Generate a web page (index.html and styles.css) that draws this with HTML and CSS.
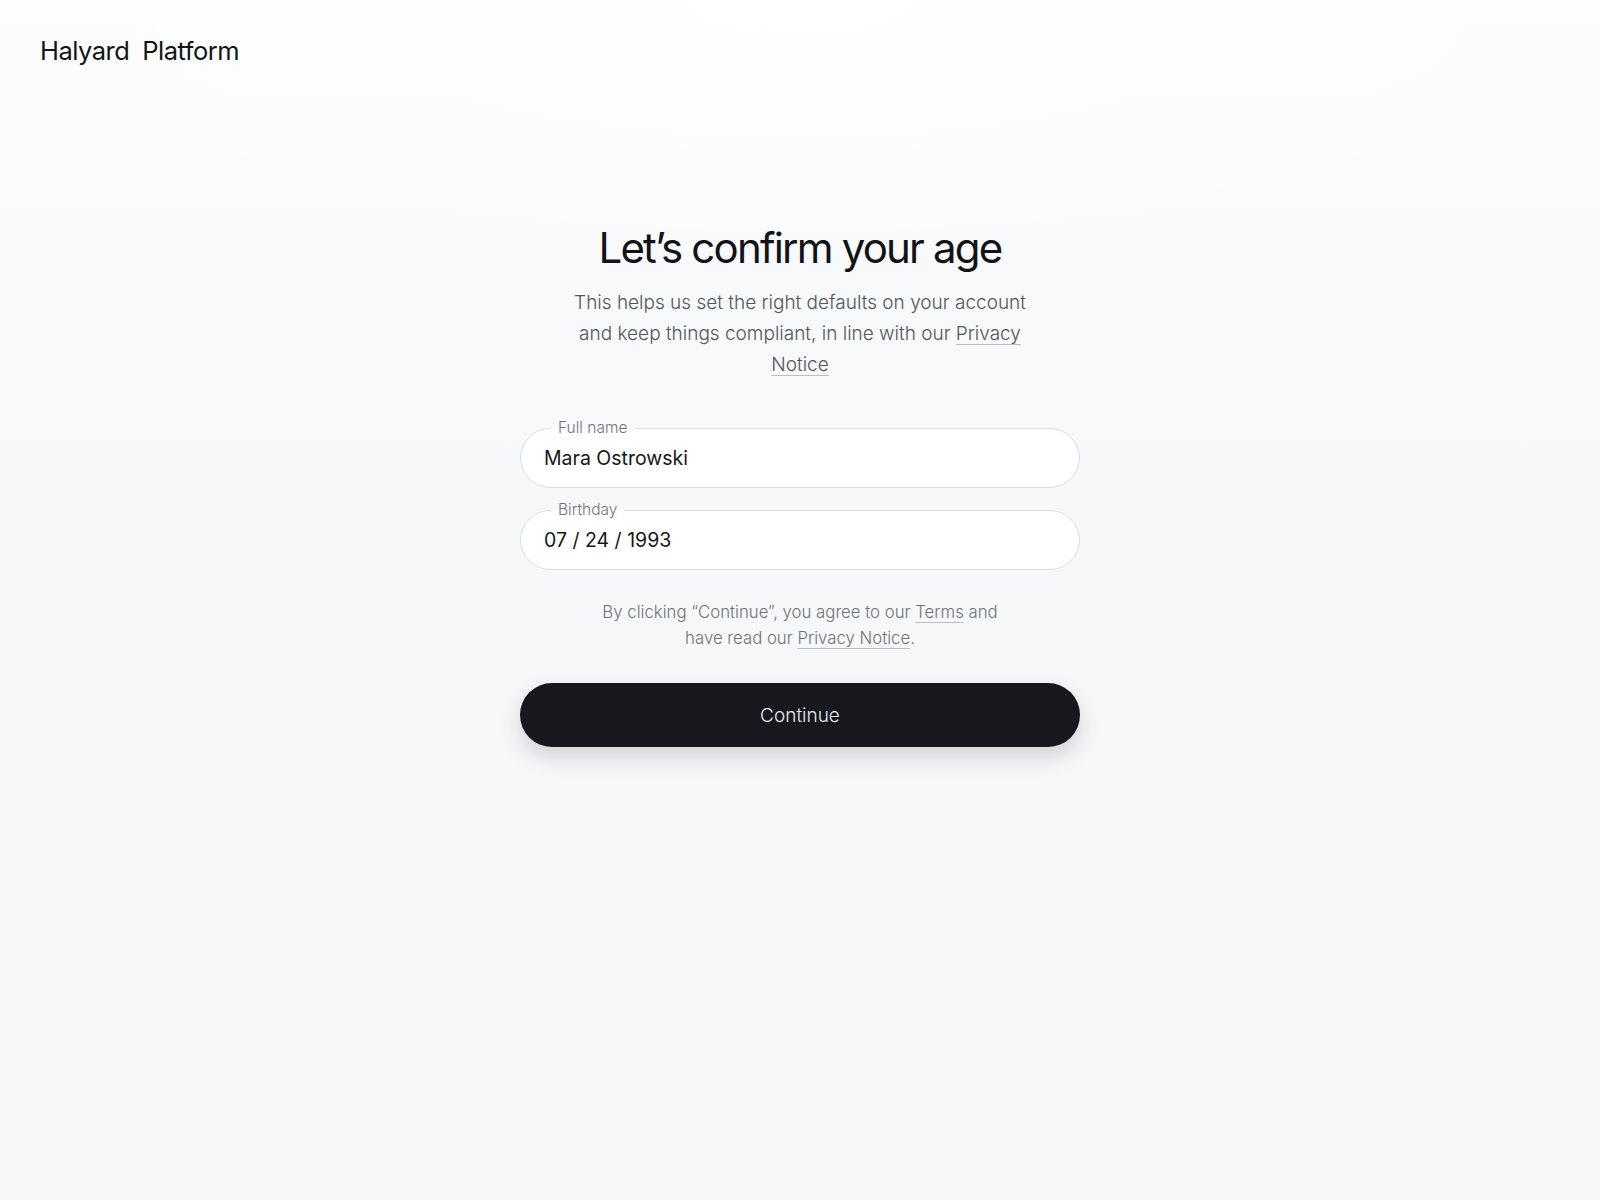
FILE: index.html
```html
<!DOCTYPE html>
<html lang="en">
<head>
<meta charset="utf-8">
<title>Halyard Platform — Confirm your age</title>
<link rel="stylesheet" href="styles.css">
</head>
<body>
<header class="topbar">
  <div class="brand"><span>Halyard</span><span>Platform</span></div>
</header>
<main class="page">
  <section class="card">
    <h1 class="title">Let’s confirm your age</h1>
    <p class="lead"><span>This helps us set the right defaults on your account</span> <span>and keep things compliant, in line with our </span><a href="#" class="link">Privacy Notice</a></p>
    <form class="form">
      <fieldset class="field">
        <legend class="field-label">Full name</legend>
        <input class="field-input" type="text" value="Mara Ostrowski">
      </fieldset>
      <fieldset class="field">
        <legend class="field-label">Birthday</legend>
        <input class="field-input" type="text" value="07 / 24 / 1993">
      </fieldset>
      <p class="legal"><span>By clicking “Continue”, you agree to our </span><a href="#" class="link">Terms</a><span> and</span><br><span>have read our </span><a href="#" class="link">Privacy Notice</a><span>.</span></p>
      <button type="button" class="btn">Continue</button>
    </form>
  </section>
</main>
</body>
</html>
```
FILE: styles.css
```css
* { box-sizing: border-box; }
html, body { height: 100%; }
body {
  margin: 0;
  font-family: Inter, "Noto Sans", "Liberation Sans", sans-serif;
  color: #111318;
  background:
    radial-gradient(ellipse 900px 260px at 50% 0%, rgba(255,255,255,0.9), rgba(255,255,255,0) 100%),
    linear-gradient(180deg, #fdfdfd 0%, #f8f9fa 25%, #f6f7f9 60%, #f6f7f9 100%);
  min-height: 1200px;
}
.topbar {
  padding: 34px 40px 0;
}
.brand {
  display: flex;
  gap: 13px;
  font-size: 25.5px;
  letter-spacing: -0.02em;
  line-height: 34px;
  color: #121418;
}
.page {
  display: flex;
  justify-content: center;
  padding-top: 153px;
}
.card {
  width: 560px;
  display: flex;
  flex-direction: column;
  align-items: center;
}
.title {
  margin: 0;
  font-size: 42px;
  font-weight: 400;
  letter-spacing: -0.043em;
  line-height: 54px;
  color: #111318;
}
.lead {
  margin: 12px 0 0;
  width: 470px;
  text-align: center;
  font-size: 19px;
  line-height: 31px;
  color: #50555d;
  font-weight: 300;
}
.link {
  color: inherit;
  text-decoration: underline;
  text-decoration-color: #b9bdc4;
  text-underline-offset: 4px;
  text-decoration-thickness: 1px;
}
.form {
  width: 100%;
  margin-top: 39px;
  display: flex;
  flex-direction: column;
}
.field {
  margin: 0 0 13px;
  padding: 0 20px 16px 23px;
  border: 1px solid #d9dce1;
  border-radius: 999px;
  background: #ffffff;
  min-width: 0;
}
.field-label {
  margin-left: 7px;
  padding: 0 7px;
  font-size: 15.5px;
  line-height: 18px;
  color: #6f747c;
  font-weight: 300;
}
.field-input {
  display: block;
  width: 100%;
  border: 0;
  outline: 0;
  background: transparent;
  padding: 0;
  margin-top: 8px;
  font-family: inherit;
  font-size: 19.5px;
  line-height: 26px;
  color: #15171b;
  font-weight: 400;
}
.legal {
  margin: 16px auto 0;
  width: 420px;
  text-align: center;
  font-size: 16.75px;
  line-height: 26px;
  color: #6d727a;
  font-weight: 300;
}
.btn {
  margin-top: 32px;
  height: 64px;
  width: 100%;
  border: 0;
  border-radius: 999px;
  background: #16181d;
  color: #e9eaec;
  font-family: inherit;
  font-size: 19px;
  font-weight: 300;
  box-shadow: 0 10px 22px rgba(20, 24, 32, 0.16);
  cursor: pointer;
}
```
